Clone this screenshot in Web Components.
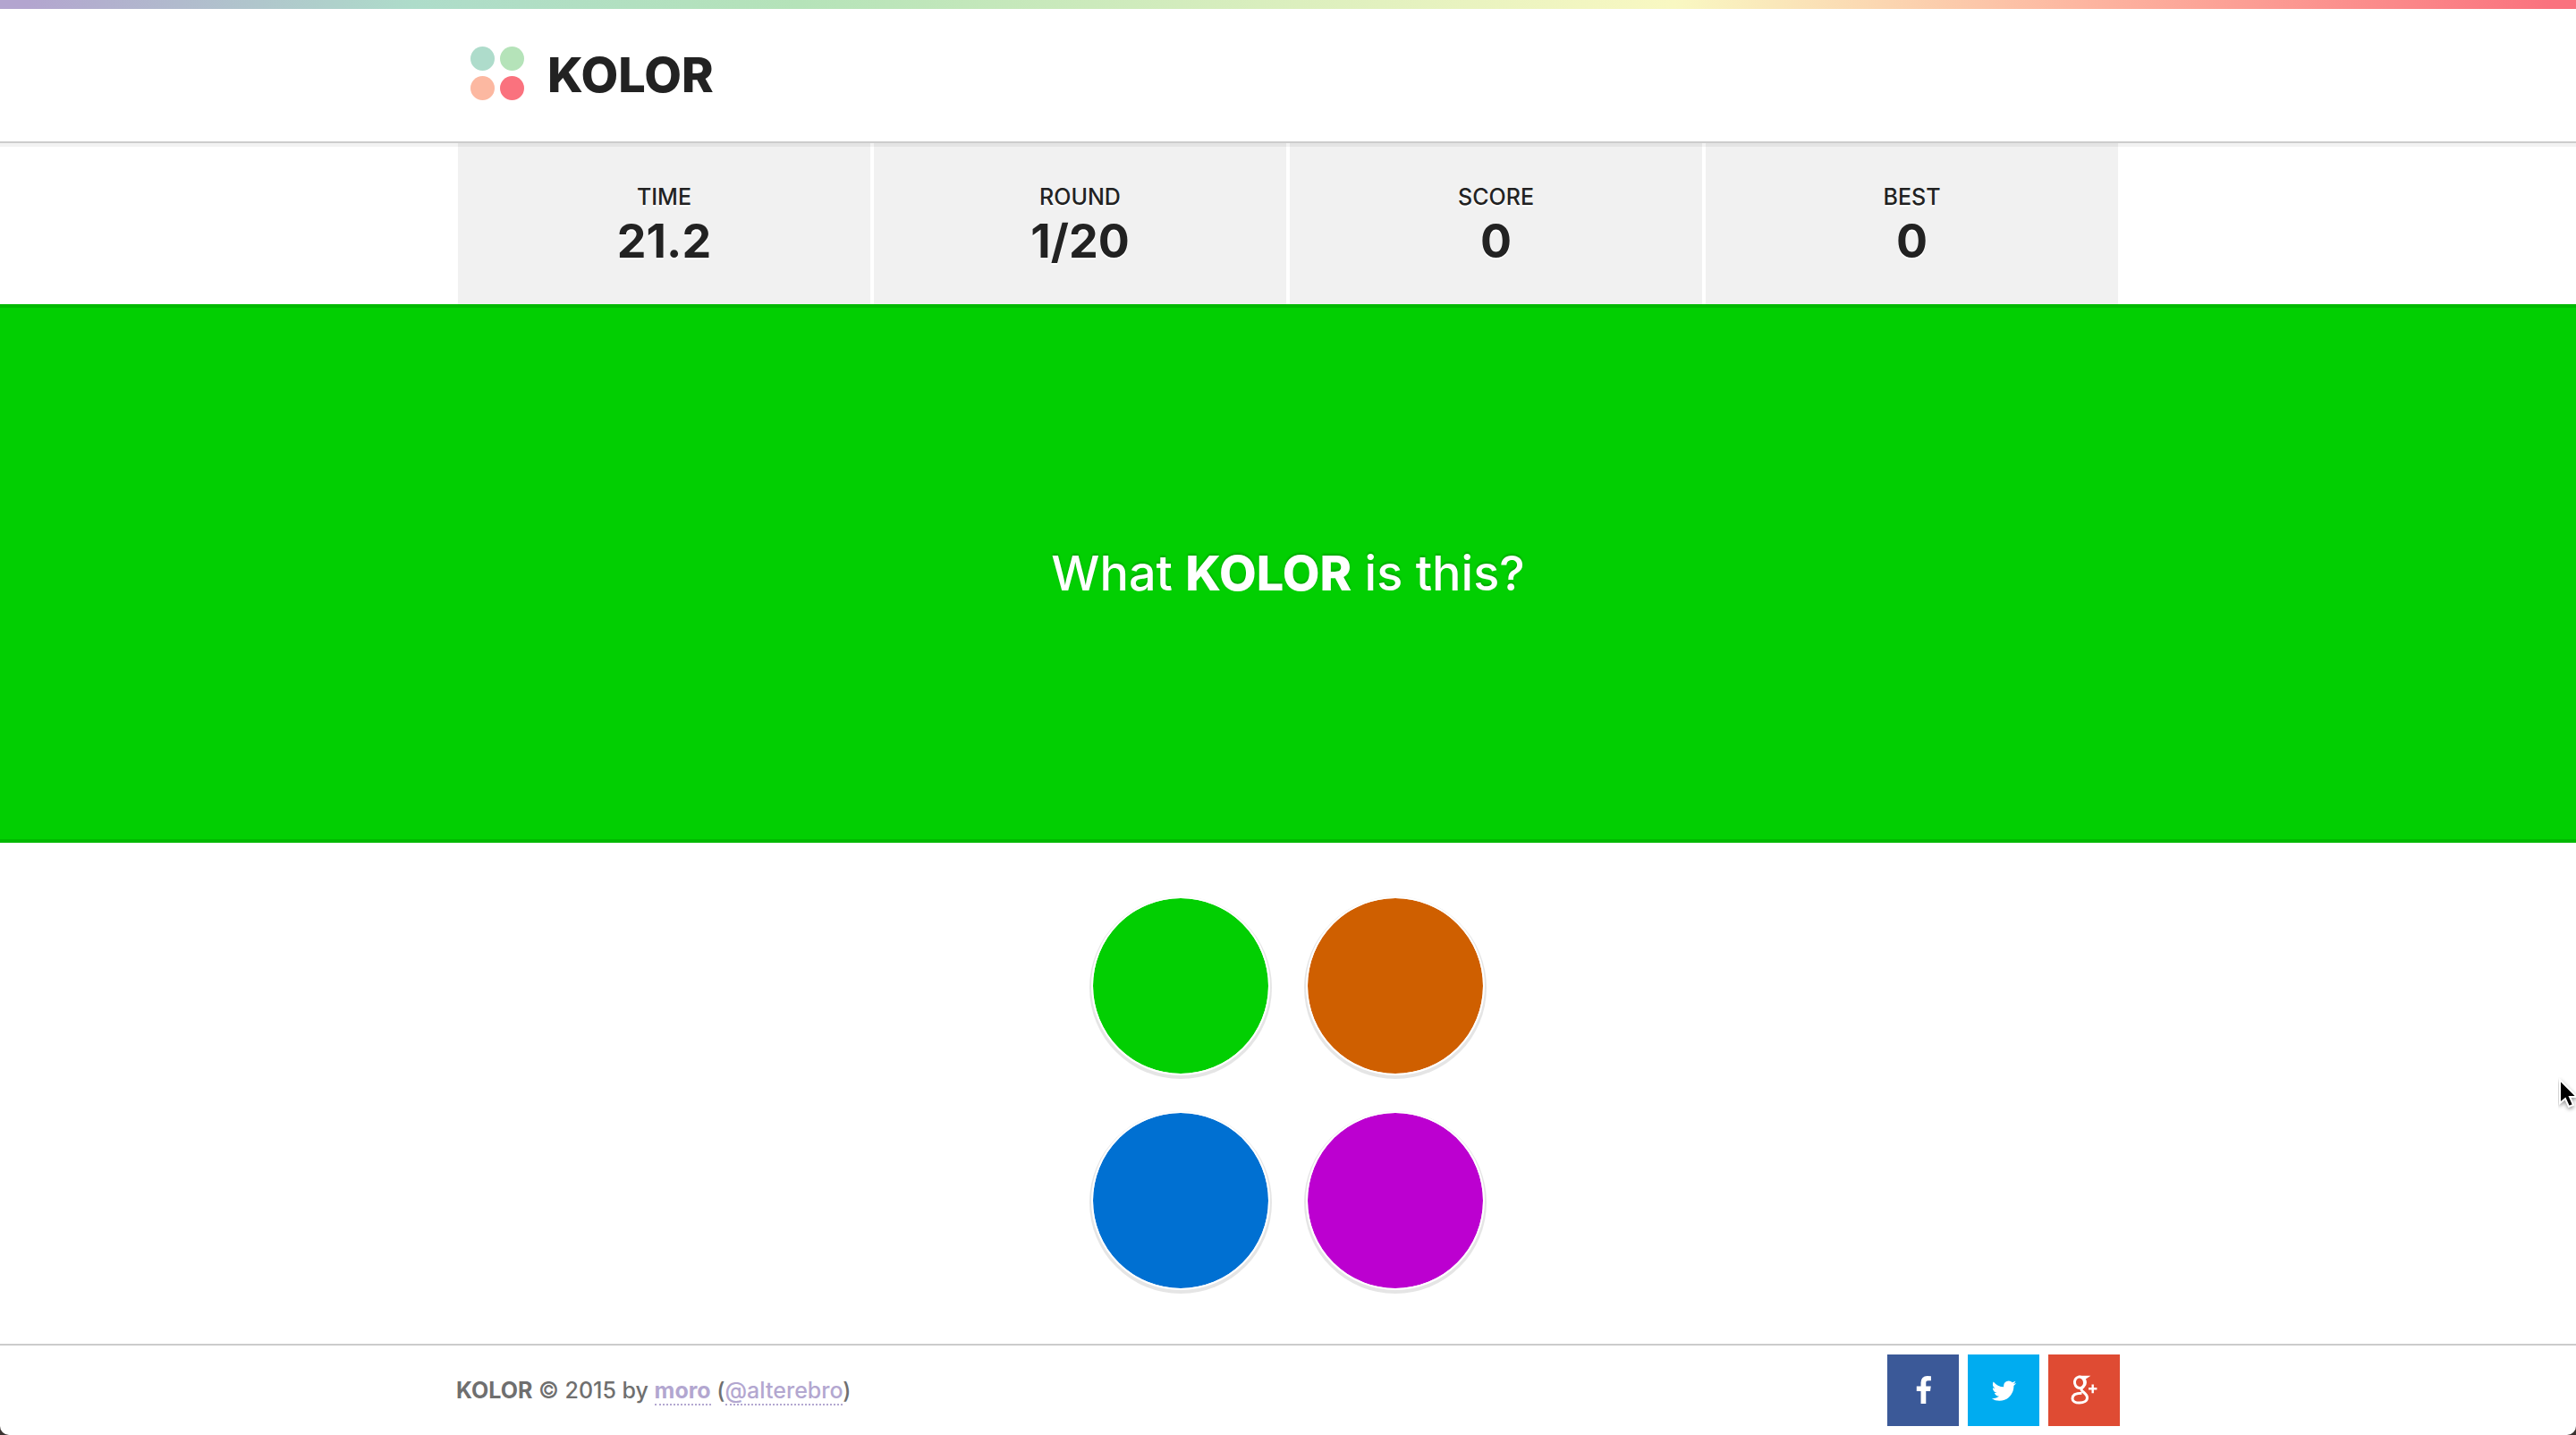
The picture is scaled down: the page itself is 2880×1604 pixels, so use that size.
<!DOCTYPE html>
<html lang="en">
<head>
<meta charset="utf-8">
<title>KOLOR</title>
<style>
  html {
    background: #3a3230;
  }
  body {
    margin: 0;
    font-family: Inter, "Open Sans", sans-serif;
    font-size: 25px;
    font-weight: 500;
    color: #222;
  }
</style>
</head>
<body>
<kolor-app>
  <kolor-header>KOLOR</kolor-header>
  <kolor-stats>
    <kolor-stat label="Time">21.2</kolor-stat>
    <kolor-stat label="Round">1/20</kolor-stat>
    <kolor-stat label="Score">0</kolor-stat>
    <kolor-stat label="Best">0</kolor-stat>
  </kolor-stats>
  <kolor-question color="#02cf02">What <b>KOLOR</b> is this?</kolor-question>
  <kolor-choices colors="#02cf02 #cf5f00 #0070d2 #bc00d0"></kolor-choices>
  <kolor-footer>
    <kolor-share slot="share" network="facebook"></kolor-share>
    <kolor-share slot="share" network="twitter"></kolor-share>
    <kolor-share slot="share" network="google"></kolor-share>
  </kolor-footer>
</kolor-app>
<kolor-pointer></kolor-pointer>

<script>
class KolorApp extends HTMLElement {
  constructor() {
    super();
    this.attachShadow({ mode: 'open' }).innerHTML = `
      <style>
        :host {
          display: flex;
          flex-direction: column;
          min-height: 100vh;
          overflow: hidden;
          background: #fff;
          border-radius: 0 0 10px 10px;
        }
        .rainbow {
          height: 10px;
          background: linear-gradient(to right, #b3a5cf 1%, #aedcca 16%, #b5e3b9 31%, #f9f8c2 65%, #fdb5a0 81%, #fa727e 99%);
        }
      </style>
      <div class="rainbow"></div>
      <slot></slot>
    `;
  }
}

class KolorHeader extends HTMLElement {
  constructor() {
    super();
    this.attachShadow({ mode: 'open' }).innerHTML = `
      <style>
        :host {
          display: block;
          position: relative;
          z-index: 1;
          border-bottom: 2px solid #ccc;
          box-shadow: 0 4px 0 rgba(0, 0, 0, 0.05);
        }
        .inner {
          display: flex;
          align-items: center;
          gap: 26px;
          max-width: 1860px;
          min-height: 148px;
          margin: 0 auto;
          box-sizing: border-box;
          padding: 0 16px;
        }
        svg { width: 60px; height: 64px; }
        h1 {
          margin: 0;
          font-size: 54px;
          line-height: 60px;
          font-weight: 800;
        }
      </style>
      <div class="inner">
        <svg viewBox="0 0 60 64" aria-hidden="true">
          <circle cx="13.5" cy="13.5" r="13.5" fill="#aedccb"/>
          <circle cx="46.5" cy="13.5" r="13.5" fill="#b5e3b9"/>
          <circle cx="13.5" cy="46.5" r="13.5" fill="#fcb8a1"/>
          <circle cx="46.5" cy="46.5" r="13.5" fill="#fa727e"/>
        </svg>
        <h1><slot></slot></h1>
      </div>
    `;
  }
}

class KolorStats extends HTMLElement {
  constructor() {
    super();
    this.attachShadow({ mode: 'open' }).innerHTML = `
      <style>
        :host {
          display: grid;
          grid-template-columns: repeat(4, 1fr);
          width: 100%;
          max-width: 1860px;
          margin: 0 auto;
        }
      </style>
      <slot></slot>
    `;
  }
}

class KolorStat extends HTMLElement {
  constructor() {
    super();
    this.attachShadow({ mode: 'open' }).innerHTML = `
      <style>
        :host {
          display: block;
          padding: 40px 0;
          border: solid #fff;
          border-width: 0 2px;
          background: #f1f1f1;
          text-align: center;
          text-shadow: 0 2px 0 #fff;
        }
        .label {
          line-height: 40px;
          text-transform: uppercase;
        }
        .value {
          font-size: 52px;
          line-height: 60px;
          font-weight: 700;
        }
      </style>
      <div class="label"></div>
      <div class="value"><slot></slot></div>
    `;
  }

  connectedCallback() {
    this.shadowRoot.querySelector('.label').textContent = this.getAttribute('label');
  }
}

class KolorQuestion extends HTMLElement {
  constructor() {
    super();
    this.attachShadow({ mode: 'open' }).innerHTML = `
      <style>
        :host {
          display: block;
          padding: 270px 20px;
          background: var(--color);
          box-shadow: inset 0 4px 0 rgba(0, 0, 0, 0.1), inset 0 -4px 0 rgba(0, 0, 0, 0.1);
          color: #fff;
          text-align: center;
        }
        h2 {
          margin: 0;
          font-size: 54px;
          line-height: 62px;
          font-weight: 500;
          text-shadow: 0 -2px 2px rgba(0, 0, 0, 0.2);
        }
        ::slotted(b) { font-weight: 800; }
      </style>
      <h2><slot></slot></h2>
    `;
  }

  connectedCallback() {
    this.style.setProperty('--color', this.getAttribute('color'));
  }
}

class KolorChoices extends HTMLElement {
  constructor() {
    super();
    this.attachShadow({ mode: 'open' }).innerHTML = `
      <style>
        :host {
          display: grid;
          grid-template-columns: 200px 200px;
          justify-content: center;
          align-content: center;
          gap: 40px;
          flex: 1;
          padding: 60px 0;
        }
        button {
          height: 200px;
          padding: 0;
          border: 2px solid #fff;
          border-radius: 50%;
          background-clip: padding-box;
          box-shadow: 0 2px 0 2px rgba(0, 0, 0, 0.1);
          cursor: pointer;
        }
      </style>
    `;
  }

  connectedCallback() {
    this.getAttribute('colors').split(' ').forEach(color => {
      const button = document.createElement('button');
      button.type = 'button';
      button.style.backgroundColor = color;
      button.setAttribute('aria-label', color);
      this.shadowRoot.append(button);
    });
  }
}

class KolorFooter extends HTMLElement {
  constructor() {
    super();
    this.attachShadow({ mode: 'open' }).innerHTML = `
      <style>
        :host {
          display: block;
          border-top: 2px solid #ccc;
          color: #6f6f6f;
        }
        .inner {
          display: flex;
          justify-content: space-between;
          align-items: center;
          max-width: 1860px;
          margin: 0 auto;
          padding: 10px 0;
        }
        p { margin: 0; line-height: 40px; }
        b { font-weight: 700; }
        a {
          color: #b3a7d0;
          text-decoration: none;
          border-bottom: 2px dotted #b3a7d0;
        }
        .share { display: flex; gap: 10px; }
      </style>
      <div class="inner">
        <p><b>KOLOR</b> © 2015 by <a href="#moro"><b>moro</b></a> (<a href="#alterebro">@alterebro</a>)</p>
        <div class="share"><slot name="share"></slot></div>
      </div>
    `;
  }
}

class KolorShare extends HTMLElement {
  static networks = {
    facebook: {
      label: 'Facebook', color: '#3b5998',
      icon: '<path transform="translate(31 24) scale(0.0187)" d="M959 12v264H802q-86 0-116 36t-30 108v189h293l-39 296H656v759H350V905H95V609h255V391q0-186 104-288.5T731 0q147 0 228 12z"/>'
    },
    twitter: {
      label: 'Twitter', color: '#00acf0',
      icon: '<path transform="translate(26 25) scale(0.0174)" d="M1620 408q-67 98-162 167 1 14 1 42 0 130-38 259.5T1305.5 1125 1121 1335.5t-258 146-323 54.5q-271 0-496-145 35 4 78 4 225 0 401-138-105-2-188-64.5T221 1033q33 5 61 5 43 0 85-11-112-23-185.5-111.5T108 710v-4q68 38 146 41-66-44-105-115t-39-154q0-88 44-163 121 149 294.5 238.5T820 653q-8-38-8-74 0-134 94.5-228.5T1135 256q140 0 236 102 109-21 205-78-37 115-142 178 93-10 186-50z"/>'
    },
    google: {
      label: 'Google Plus', color: '#df4b33',
      icon: `
        <g fill="none" stroke="#fff">
          <ellipse cx="35" cy="31.3" rx="5.5" ry="6.3" stroke-width="3" transform="rotate(-12 35 31.3)"/>
          <path stroke-width="2" d="M34 24.8h10l-2.5 1.6h-3"/>
          <path stroke-width="3" d="M38.5 26c4 3 3.5 7.5.8 9.8-2.3 2-3.3 3.2-1.3 5.1 2.8 2.4 5.5 4 5.500 7.3 0 3.8-3.800 5.900-8.800 5.900-4.800 0-7.700-2-7.700-4.900 0-4.200 4.800-5.900 10.500-5.900"/>
          <path stroke-width="2.4" d="M45 38.2h9.400M49.700 33.400v9.800"/>
        </g>`
    }
  };

  constructor() {
    super();
    this.attachShadow({ mode: 'open' }).innerHTML = `
      <style>
        :host { display: block; }
        a { display: block; }
        svg { display: block; width: 80px; height: 80px; fill: #fff; }
      </style>
      <a href="#"><svg viewBox="0 0 80 80" aria-hidden="true"></svg></a>
    `;
  }

  connectedCallback() {
    const network = KolorShare.networks[this.getAttribute('network')];
    const link = this.shadowRoot.querySelector('a');
    link.href = '#' + this.getAttribute('network');
    link.setAttribute('aria-label', network.label);
    link.style.background = network.color;
    this.shadowRoot.querySelector('svg').innerHTML = network.icon;
  }
}

// mouse pointer resting on the right edge of the window
class KolorPointer extends HTMLElement {
  constructor() {
    super();
    this.attachShadow({ mode: 'open' }).innerHTML = `
      <style>
        :host {
          position: absolute;
          top: 1204px;
          right: 0;
          width: 20px;
          height: 40px;
          overflow: hidden;
          pointer-events: none;
        }
        svg { display: block; width: 28px; height: 40px; filter: drop-shadow(0 2px 2px rgba(0, 0, 0, 0.4)); }
      </style>
      <svg viewBox="0 0 28 40" aria-hidden="true">
        <path d="M2 3v26l6-5 4 9 5-2-4-9h8z" fill="#000" stroke="#fff" stroke-width="2"/>
      </svg>
    `;
  }
}

customElements.define('kolor-app', KolorApp);
customElements.define('kolor-header', KolorHeader);
customElements.define('kolor-stats', KolorStats);
customElements.define('kolor-stat', KolorStat);
customElements.define('kolor-question', KolorQuestion);
customElements.define('kolor-choices', KolorChoices);
customElements.define('kolor-footer', KolorFooter);
customElements.define('kolor-share', KolorShare);
customElements.define('kolor-pointer', KolorPointer);
</script>
</body>
</html>
